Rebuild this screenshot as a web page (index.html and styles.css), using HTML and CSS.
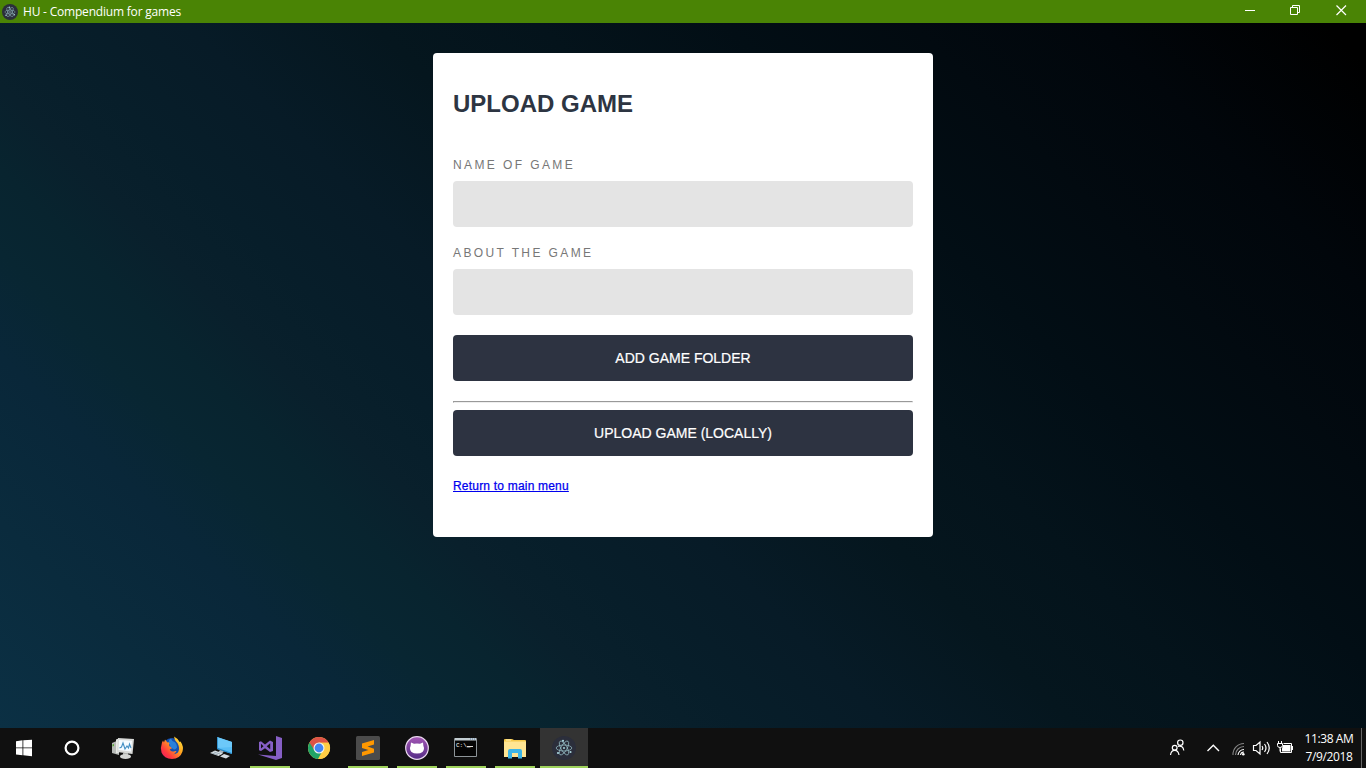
FILE: index.html
```html
<!DOCTYPE html>
<html lang="en">
<head>
<meta charset="utf-8">
<title>HU - Compendium for games</title>
<link rel="stylesheet" href="styles.css">
</head>
<body>
<svg class="defs" width="0" height="0" aria-hidden="true">
  <symbol id="electron" viewBox="0 0 24 24">
    <circle cx="12" cy="12" r="12" fill="#2b2e3b"/>
    <g fill="none" stroke="#9bc4cc" stroke-width=".7">
      <ellipse cx="12" cy="12" rx="7.800" ry="3" transform="rotate(60 12 12)"/>
      <ellipse cx="12" cy="12" rx="7.800" ry="3"/>
      <ellipse cx="12" cy="12" rx="7.800" ry="3" transform="rotate(-60 12 12)"/>
    </g>
    <g fill="#a9d4dc"><circle cx="12" cy="12" r="1"/><circle cx="6" cy="17" r="1.100"/><circle cx="18.500" cy="16" r="1.100"/><circle cx="11" cy="4.800" r="1.100"/></g>
  </symbol>
</svg>
<header class="titlebar">
  <svg class="app-icon" width="16" height="16"><use href="#electron"/></svg>
  <span class="title">HU - Compendium for games</span>
  <div class="controls">
    <svg width="46" height="23"><path d="M19 10.500h10" stroke="#fff"/></svg>
    <svg width="46" height="23" fill="none" stroke="#fff"><path d="M18.500 7.500h7v7h-7zM20.500 7.500v-2h7v7h-2"/></svg>
    <svg width="46" height="23"><path d="M18.500 5.500l9.500 9.500M28 5.500l-9.500 9.500" stroke="#fff" stroke-width="1.200"/></svg>
  </div>
</header>
<main class="page">
  <form class="card">
    <h1>UPLOAD GAME</h1>
    <label for="name">NAME OF GAME</label>
    <input id="name" type="text">
    <label for="about">ABOUT THE GAME</label>
    <input id="about" type="text">
    <button type="button">ADD GAME FOLDER</button>
    <hr>
    <button type="button">UPLOAD GAME (LOCALLY)</button>
    <a href="#">Return to main menu</a>
  </form>
</main>
<footer class="taskbar">
  <div class="system">
    <svg width="48" height="40"><path fill="#fff" d="M16 13.200l6.500-.9v7.200H16zM23.300 12.200L32 11.700v7.800h-8.700zM16 20.300h6.500v6.900l-6.500-.8zM23.300 20.300H32v8l-8.700-1z"/></svg>
    <svg width="48" height="40"><circle cx="24" cy="20" r="6.400" fill="none" stroke="#fff" stroke-width="2.200"/></svg>
  </div>
  <div class="apps">
    <div class="app"><svg width="24" height="24"><path d="M1 7l7-3v15l-7-2z" fill="#b8bbb8"/><path d="M1.500 8.500l1.500-.5v2l-1.500.5z" fill="#55a733"/><path d="M5 3.500l3-1v14l-3 1z" fill="#e7e9e6"/><path d="M7 2l16 1-1.500 15L6 16z" fill="#d8dad8"/><path d="M8 4l13 .7-1 10.800L7.500 14z" fill="#f5fbff"/><path d="M8.500 12l2-1 1.500-4 2 6 2-3 1.500 2 1-4 1.500 4" fill="none" stroke="#438fc4" stroke-width="1.100"/><path d="M12 17h5v3h-5z" fill="#b2b4b1"/><ellipse cx="14.500" cy="20.500" rx="5.500" ry="2.600" fill="#d4d6d4"/></svg></div>
    <div class="app"><svg width="24" height="24"><defs><linearGradient id="fox" x1="1" y1="0" x2="0" y2="1"><stop stop-color="#fff044"/><stop offset=".4" stop-color="#ffa51f"/><stop offset=".72" stop-color="#ff3c3d"/><stop offset="1" stop-color="#eb1569"/></linearGradient></defs><circle cx="12" cy="11.500" r="9.500" fill="#164fae"/><path d="M14 .5q4 2 5.500 5.500l1-.5q3.500 5 2 10Q20 23 12 23 4 22.500 1.500 16.500.2 11.500 2 6.500l1-2 1 2 1-3 2.500 3q2-.4 3 .3L9 8.800l.7 1.700 3 .5-1 1.500-2 .7q1 2.700 3.800 2.200 2-.6 3.100-.2Q14 19 12 18q6 1 7-4.500.3-4.500-2.500-7.500Q14.500 4 14 .5" fill="url(#fox)"/><path d="M9 6.800q-.8-3 2-4.300.6 2.500 3.500 3.500Q17 7.500 17 11.500q-1 2-3 2l-3-2" fill="#2880db"/></svg></div>
    <div class="app"><svg width="24" height="24"><path d="M8 1l15 5v12L8 13z" fill="#58bdf5"/><path d="M8 1l15 5v5L8 12z" fill="#6cc8f9"/><path d="M8 1v12l15 5v-1L8.800 12V1.300z" fill="#2789c8"/><path d="M11 14l4 1.500-2 2-4-1z" fill="#aab8c3"/><path d="M1 17l5-2.500 8 3L9.500 20z" fill="#dbe2e5"/><path d="M11 20.500l4-2.500 6 2-4 2.500z" fill="#d5dce2"/><path d="M3 17l6 2m-4-3l6 2" stroke="#849aa8" stroke-width=".7"/></svg></div>
    <div class="app open"><svg width="24" height="24" fill="#865fc5"><path d="M18 0l6 2v20l-6 2L0 18.500l18 1.500z"/><path fill-rule="evenodd" d="M1 6l2-.8L7 8.500l5-4 3 1.500v9l-3 1-5-3.800L3 15l-2-.8zM3 7.800v4.700l2.500-2.300zM12.200 7.200L8.700 10.200l3.500 3z"/></svg></div>
    <div class="app"><svg width="24" height="24"><circle cx="12" cy="12" r="11" fill="#ffcd45"/><path d="M2.500 6.500A11 11 0 0 0 11 23l5-9z" fill="#20a467"/><path d="M12 6.700h9.700A11 11 0 0 0 2.500 6.500l5 8" fill="#de5347"/><path d="M12 6.800h9.700A11 11 0 0 1 11.300 23L17 14" fill="#ffcd45"/><circle cx="12" cy="12" r="5.500" fill="#f4f5ef"/><circle cx="12" cy="12" r="4.400" fill="#4385f5"/></svg></div>
    <div class="app open"><svg width="24" height="24"><rect width="24" height="24" rx="1.500" fill="#4b4b4b"/><path d="M6 7.500L18 4v4.500l-6.500 2L18 12.700v3.800L6 20v-4l6.500-2L6 12z" fill="#ff9800"/></svg></div>
    <div class="app open"><svg width="24" height="24"><defs><linearGradient id="git" x2="0" y2="1"><stop stop-color="#a457b5"/><stop offset="1" stop-color="#542c86"/></linearGradient></defs><circle cx="12" cy="12" r="11.300" fill="url(#git)" stroke="#ead8ef" stroke-width="1.200"/><path d="M6 6.500l3 1.300q3-.7 6 0l3-1.300.4 3.500Q20 13 17.500 16q-2 1.500-5.500 1.500T6.500 16Q4 13 5.600 10z" fill="#fff"/></svg></div>
    <div class="app open"><svg class="console" width="24" height="24"><path d="M.5 2.500h22v18H.5z" fill="#050505" stroke="#8d9498"/><path d="M1 2h21v2.500H1z" fill="#c3cdd2"/><path d="M16 3h1m1 0h1m1 0h1" stroke="#5478a2"/><text x="2" y="11">C:\_</text><path d="M13 10.500h6" stroke="#ddd"/></svg></div>
    <div class="app open"><svg width="24" height="24"><path d="M1 4q0-1 1-1h7l2 1h11q1 0 1 1v15H1z" fill="#f6c94b"/><path d="M1 5.500h22V21H1z" fill="#ffe593"/><path d="M3 4h5" stroke="#fff3c2"/><path d="M5 15q0-2 2-2h10q2 0 2 2v7.500h-4V17H9v5.500H5z" fill="#3db5e6"/></svg></div>
    <div class="app open active"><svg width="24" height="24"><use href="#electron"/></svg></div>
  </div>
  <div class="tray">
    <svg width="192" height="40" viewBox="-10 0 192 40" fill="none" stroke="#fff" stroke-width="1.200">
      <circle cx="64.300" cy="14.700" r="2.700"/><path d="M62 18.300q5-1 5.800 4.200"/><circle cx="58.700" cy="19.700" r="2.400"/><path d="M54.500 27q.6-4.700 4.200-4.700t4.300 4.700"/>
      <path d="M91.500 23l5.800-5.800L103 23" stroke-width="1.400"/>
      <g stroke-width="1.100"><path d="M117 27A11 11 0 0 1 128 15.500M119.500 27A8.500 8.500 0 0 1 128 18.500" stroke="#858585"/><path d="M122 27A6 6 0 0 1 128 21.500M124.500 27A3.500 3.500 0 0 1 128 24"/></g><circle cx="127.300" cy="26.200" r="1.300" fill="#fff" stroke="none"/>
      <path d="M137.500 17.500h2.500l4-3.500v12l-4-3.500h-2.500zM146 18q1.500 2 0 4M148.500 16q3 4 0 8M151 14q4.500 6 0 12"/>
      <g stroke-width="1"><path d="M167.500 15.500h8v9h-11v-4M176.500 18v4"/><path d="M167 17h7.500v6.500H166v-3z" fill="#fff" stroke="none"/><path d="M162.500 13v3M165.500 13v3M161.500 15.500h5v2q0 2-2.500 2t-2.500-2zM164 19.500v4"/></g>
    </svg>
    <div class="clock"><span>11:38 AM</span><span>7/9/2018</span></div>
    <div class="peek"></div>
  </div>
</footer>
</body>
</html>
```
FILE: styles.css
```css
* { box-sizing: border-box; }
body {
  margin: 0;
  height: 768px;
  display: flex;
  flex-direction: column;
  overflow: hidden;
  font-family: "Liberation Sans", Arial, sans-serif;
}
svg { display: block; flex: none; }
.defs { display: none; }
.titlebar {
  height: 23px;
  display: flex;
  align-items: center;
  padding-left: 2px;
  background: #4a8405;
  color: #fff;
  font: 12px/22px "Open Sans", sans-serif;
}
.title { margin-left: 5px; letter-spacing: -0.2px; }
.controls { display: flex; margin-left: auto; padding-right: 2px; }
.page {
  flex: 1;
  padding-top: 30px;
  background: linear-gradient(45deg, #0b3044 0%, #0a2b3d 10%, #092739 18%, #082632 23%, #08242f 27%, #09202c 31%, #071e2a 36%, #071b27 43%, #05161e 52%, #04131b 60%, #020e15 69%, #020a10 78%, #01060b 87%, #000 98%);
}
.card {
  width: 500px;
  height: 484px;
  margin: 0 auto;
  padding: 35px 20px 0;
  background: #fff;
  border-radius: 4px;
}
h1 {
  margin: 0 0 38px;
  font-size: 24px;
  line-height: 32px;
  color: #2d3542;
}
label {
  display: block;
  height: 23px;
  font-size: 12px;
  line-height: 14px;
  letter-spacing: 2.4px;
  color: #777;
}
input {
  display: block;
  width: 100%;
  height: 46px;
  margin: 0 0 19px;
  border: 0;
  border-radius: 4px;
  background: #e4e4e4;
}
button {
  display: block;
  width: 100%;
  height: 46px;
  padding: 0;
  border: 0;
  border-radius: 4px;
  background: #2d3341;
  color: #fff;
  font: 14px "Liberation Sans", Arial, sans-serif;
  -webkit-text-stroke: 0.2px #fff;
}
input + button { margin-top: 20px; }
hr {
  margin: 20px 0 7px;
  border: 1px solid #eee;
  border-top-color: #999;
  border-left-color: #999;
}
a {
  display: inline-block;
  margin-top: 23px;
  font-size: 12px;
  line-height: 14px;
  letter-spacing: 0.2px;
  color: #00e;
  -webkit-text-stroke: 0.25px #00e;
}
.taskbar { height: 40px; display: flex; background: #101010; }
.system { display: flex; width: 99px; }
.apps { display: flex; gap: 1px; }
.app {
  width: 48px;
  height: 40px;
  padding: 8px 0 0 12px;
}
.open { background: linear-gradient(#9fd35c, #9fd35c) 4px 100% / 40px 2px no-repeat; }
.active { background: linear-gradient(#9fd35c, #9fd35c) 0 100% / 48px 2px no-repeat #333; }
.console text { fill: #fff; font: 6px "Liberation Mono", monospace; }
.tray { display: flex; margin-left: auto; }
.clock {
  width: 62px;
  display: flex;
  flex-direction: column;
  padding-top: 2px;
  margin-right: 1px;
  text-align: center;
  color: #fff;
  font: 12px/18px "Open Sans", sans-serif;
  letter-spacing: -0.4px;
}
.peek { width: 5px; border-left: 1px solid #666; }
```
